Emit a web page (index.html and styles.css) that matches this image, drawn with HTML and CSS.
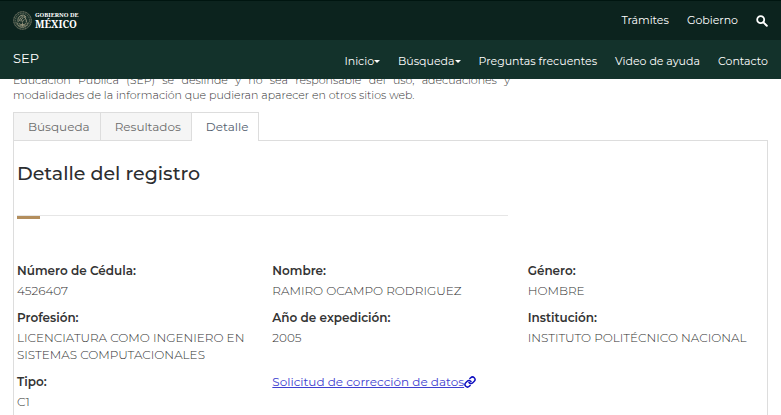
FILE: index.html
```html
<!DOCTYPE html>
<html lang="es">
<head>
<meta charset="utf-8">
<meta name="viewport" content="width=device-width, initial-scale=1">
<title>Detalle del registro</title>
<link rel="stylesheet" href="styles.css">
</head>
<body>
<header class="site-header">
  <div class="gov-bar">
    <a class="brand" href="#">
      <svg class="seal" viewBox="0 0 40 40" aria-hidden="true">
        <circle cx="20" cy="20" r="18.500" fill="#1d332b" stroke="#8d8c78" stroke-width="2" stroke-dasharray="2.500 1"/>
        <circle cx="20" cy="20" r="15" fill="none" stroke="#7a8070" stroke-width="1.500" stroke-dasharray="3 2"/>
        <path d="M11 23c-2-7 2-13 8-14 4-1 7 1 8 4l-4-1c3 3 6 6 5 12M14 21c0-5 3-9 7-9M17 22c0-4 2-6 5-8M20 24c0-3 2-5 4-6" fill="none" stroke="#aaa68e" stroke-width="1.800"/>
        <path d="M8 24c2 7 7 10 12 10s10-3 12-10M12 26c5 4 11 4 16 0M14 30h12M20 25v8" fill="none" stroke="#9b987f" stroke-width="1.800"/>
      </svg>
      <span class="brand-text"><span class="brand-small">GOBIERNO DE</span><span class="brand-big">MÉXICO</span></span>
    </a>
    <nav class="gov-nav" aria-label="Gobierno">
      <a href="#">Trámites</a>
      <a href="#">Gobierno</a>
      <a href="#" aria-label="Buscar"><svg class="search" viewBox="0 0 12 12" aria-hidden="true"><circle cx="4.700" cy="4.700" r="3.500" fill="none" stroke="#fff" stroke-width="1.800"/><path d="M7.400 7.400l3.400 3.400" stroke="#fff" stroke-width="2" stroke-linecap="round"/></svg></a>
    </nav>
  </div>
  <div class="site-bar">
    <a class="site-name" href="#">SEP</a>
    <nav class="site-nav" aria-label="Principal">
      <a class="has-menu" href="#">Inicio</a>
      <a class="has-menu" href="#">Búsqueda</a>
      <a href="#">Preguntas frecuentes</a>
      <a href="#">Video de ayuda</a>
      <a href="#">Contacto</a>
    </nav>
  </div>
</header>
<main class="content">
  <p class="notice">Educación Pública (SEP) se deslinde y no sea responsable del uso, adecuaciones y modalidades de la información que pudieran aparecer en otros sitios web.</p>
  <nav class="tabs" aria-label="Secciones">
    <a class="tab" href="#">Búsqueda</a>
    <a class="tab" href="#">Resultados</a>
    <a class="tab active" href="#" aria-current="page">Detalle</a>
  </nav>
  <section class="panel">
    <h1 class="title">Detalle del registro</h1>
    <hr class="rule">
    <dl class="fields">
      <div><dt>Número de Cédula:</dt><dd>4526407</dd></div>
      <div><dt>Nombre:</dt><dd>RAMIRO OCAMPO RODRIGUEZ</dd></div>
      <div><dt>Género:</dt><dd>HOMBRE</dd></div>
      <div><dt>Profesión:</dt><dd>LICENCIATURA COMO INGENIERO EN<br>SISTEMAS COMPUTACIONALES</dd></div>
      <div><dt>Año de expedición:</dt><dd>2005</dd></div>
      <div><dt>Institución:</dt><dd>INSTITUTO POLITÉCNICO NACIONAL</dd></div>
      <div><dt>Tipo:</dt><dd>C1</dd></div>
      <div><a class="fix-link" href="#"><span>Solicitud de corrección de datos</span><svg class="chain" viewBox="0 0 24 24" aria-hidden="true"><path d="M10 13a5 5 0 0 0 7.540.540l3-3a5 5 0 0 0-7.070-7.070l-1.720 1.710M14 11a5 5 0 0 0-7.540-.540l-3 3a5 5 0 0 0 7.070 7.070l1.710-1.710" fill="none" stroke="currentColor" stroke-width="3" stroke-linecap="round"/></svg></a></div>
    </dl>
  </section>
</main>
</body>
</html>
```
FILE: styles.css
```css
* { box-sizing: border-box; }
html { overflow: hidden; }
body {
  margin: 0;
  background: #fff;
  color: #333;
  font-family: Montserrat, Inter, "Open Sans", sans-serif;
  font-size: 12px;
  line-height: 17px;
}
a { color: inherit; text-decoration: none; }

.site-header {
  position: fixed;
  top: 0;
  left: 0;
  right: 0;
  z-index: 1;
  color: #fff;
}
.gov-bar, .site-bar {
  display: flex;
  align-items: center;
  justify-content: space-between;
  padding: 0 13px;
}
.gov-bar { height: 40px; background: #0c231e; border-top: 1px solid #001510; }
.site-bar { height: 39px; background: #13322b; }
.brand { display: flex; align-items: center; gap: 3px; }
.seal { width: 19px; height: 19px; }
.brand-text {
  display: flex;
  flex-direction: column;
  font-family: "Noto Serif", "DejaVu Serif", "Liberation Serif", serif;
  font-weight: 700;
}
.brand-small { font-size: 6px; line-height: 6px; }
.brand-big { font-size: 10px; line-height: 12px; }
.gov-nav { display: flex; align-items: center; gap: 18px; font-size: 11px; }
.search { display: block; width: 12px; height: 12px; }
.site-name { font-size: 13px; padding-bottom: 2px; }
.site-nav { display: flex; gap: 18px; font-size: 11px; padding-top: 4px; }
.has-menu { display: flex; align-items: center; }
.has-menu::after {
  content: "";
  border: 3px solid transparent;
  border-top-color: #fff;
  border-bottom: 0;
}

.content { padding: 73px 13px 0; }
.notice {
  max-width: 497px;
  margin: 0 0 9px;
  font-size: 11px;
  font-weight: 300;
  line-height: 15px;
  text-align: justify;
}
.tabs { display: flex; }
.tab {
  padding: 5px 10px 5px 14px;
  border: 1px solid #ddd;
  border-bottom: 0;
  background: #f5f5f5;
  color: #6b6b6b;
}
.tab + .tab { margin-left: -1px; }
.tab.active { margin-bottom: -1px; padding-bottom: 6px; background: #fff; color: #545f70; }
.panel { border: 1px solid #ddd; padding: 22px 3px 10px; }
.title { margin: 0; color: #2c2e30; font-size: 19px; line-height: 22px; font-weight: 500; }
.rule {
  max-width: 491px;
  height: 4px;
  margin: 30px 0 43px;
  border: 0;
  border-top: 1px solid #e6e6e6;
  background: linear-gradient(#b38e5d, #b38e5d) left / 23px no-repeat;
}
.fields {
  display: grid;
  grid-template-columns: repeat(3, minmax(0, 1fr));
  column-gap: 10px;
  row-gap: 10px;
  margin: 0 -9px 0 0;
}
dt { font-weight: 600; }
dd { margin: 3px 0 0; font-weight: 300; }
.fix-link { display: flex; align-items: center; color: #4040d0; }
.fix-link span { text-decoration: underline; }
.chain { width: 12px; height: 12px; color: #1010c0; }
```
